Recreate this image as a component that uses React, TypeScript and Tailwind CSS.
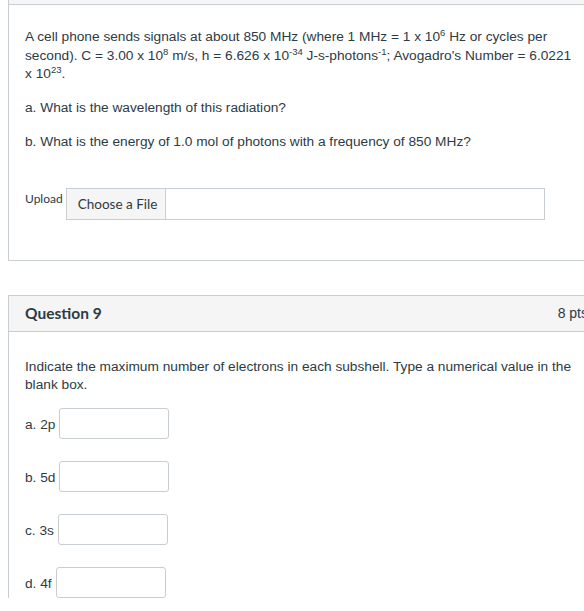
type AnswerRowProps = {
  label: string
}

function AnswerRow({ label }: AnswerRowProps) {
  return (
    <div className="flex items-center gap-[4px]">
      <span className="pt-[5px] leading-[18.5px]">{label}</span>
      <input
        type="text"
        className="w-[110px] h-[31px] border border-[#c7cdd1] rounded-[3px] bg-white outline-none"
      />
    </div>
  )
}

export default function App() {
  return (
    <div className="w-[584px] h-[611px] overflow-hidden bg-white text-[#2d3b45] text-[13.7px] font-['Liberation_Sans',Arial,sans-serif]">
      {/* previous question, bottom part */}
      <div className="ml-[8px] w-[596px] border-l border-b border-[#c7cdd1]">
        <div className="h-[5px] bg-[#f5f5f5] border-b border-[#c7cdd1]" />
        <div className="pl-[16px] pt-[23px] pb-[40px]">
          <div className="w-[552px] leading-[18.5px]">
            <p>
              A cell phone sends signals at about 850 MHz (where 1 MHz = 1 x 10<sup className="text-[9.5px]">6</sup> Hz or
              cycles per second). C = 3.00 x 10<sup className="text-[9.5px]">8</sup> m/s, h = 6.626 x 10
              <sup className="text-[9.5px]">-34</sup> J-s-photons<sup className="text-[9.5px]">-1</sup>; Avogadro's Number =
              6.0221 x 10<sup className="text-[9.5px]">23</sup>.
            </p>
            <p className="mt-[15px]">a. What is the wavelength of this radiation?</p>
            <p className="mt-[16px]">b. What is the energy of 1.0 mol of photons with a frequency of 850 MHz?</p>
          </div>

          <div className="mt-[36px] flex items-start">
            <span className="w-[41px] pt-[3px] text-[12px] leading-[16px] font-['Lato',sans-serif]">Upload</span>
            <div className="w-[479px] h-[32px] border border-[#c7cdd1] flex">
              <button className="w-[99px] h-full pl-[3px] bg-[#f5f5f5] border-r border-[#c7cdd1] rounded-l-[3px] text-[13.5px] pt-[1px] text-[#2d3b45] font-['Lato',sans-serif]">
                Choose a File
              </button>
            </div>
          </div>
        </div>
      </div>

      {/* Question 9 */}
      <div className="mt-[34px] ml-[8px] w-[596px] border-t border-l border-[#c7cdd1]">
        <div className="h-[36px] bg-[#f5f5f5] border-b border-[#c7cdd1] flex items-center justify-between px-[16px]">
          <h2 className="pt-[1px] text-[15.5px] font-bold font-['Lato',sans-serif]">Question 9</h2>
          <span className="text-[14px]">8 pts</span>
        </div>
        <div className="pl-[16px] pr-[16px] pt-[26px]">
          <p className="leading-[18.5px]">
            Indicate the maximum number of electrons in each subshell. Type a numerical value in the blank box.
          </p>
          <div className="mt-[13px] flex flex-col gap-[22px]">
            <AnswerRow label="a. 2p" />
            <AnswerRow label="b. 5d" />
            <AnswerRow label="c. 3s" />
            <AnswerRow label="d. 4f" />
          </div>
        </div>
      </div>
    </div>
  )
}
